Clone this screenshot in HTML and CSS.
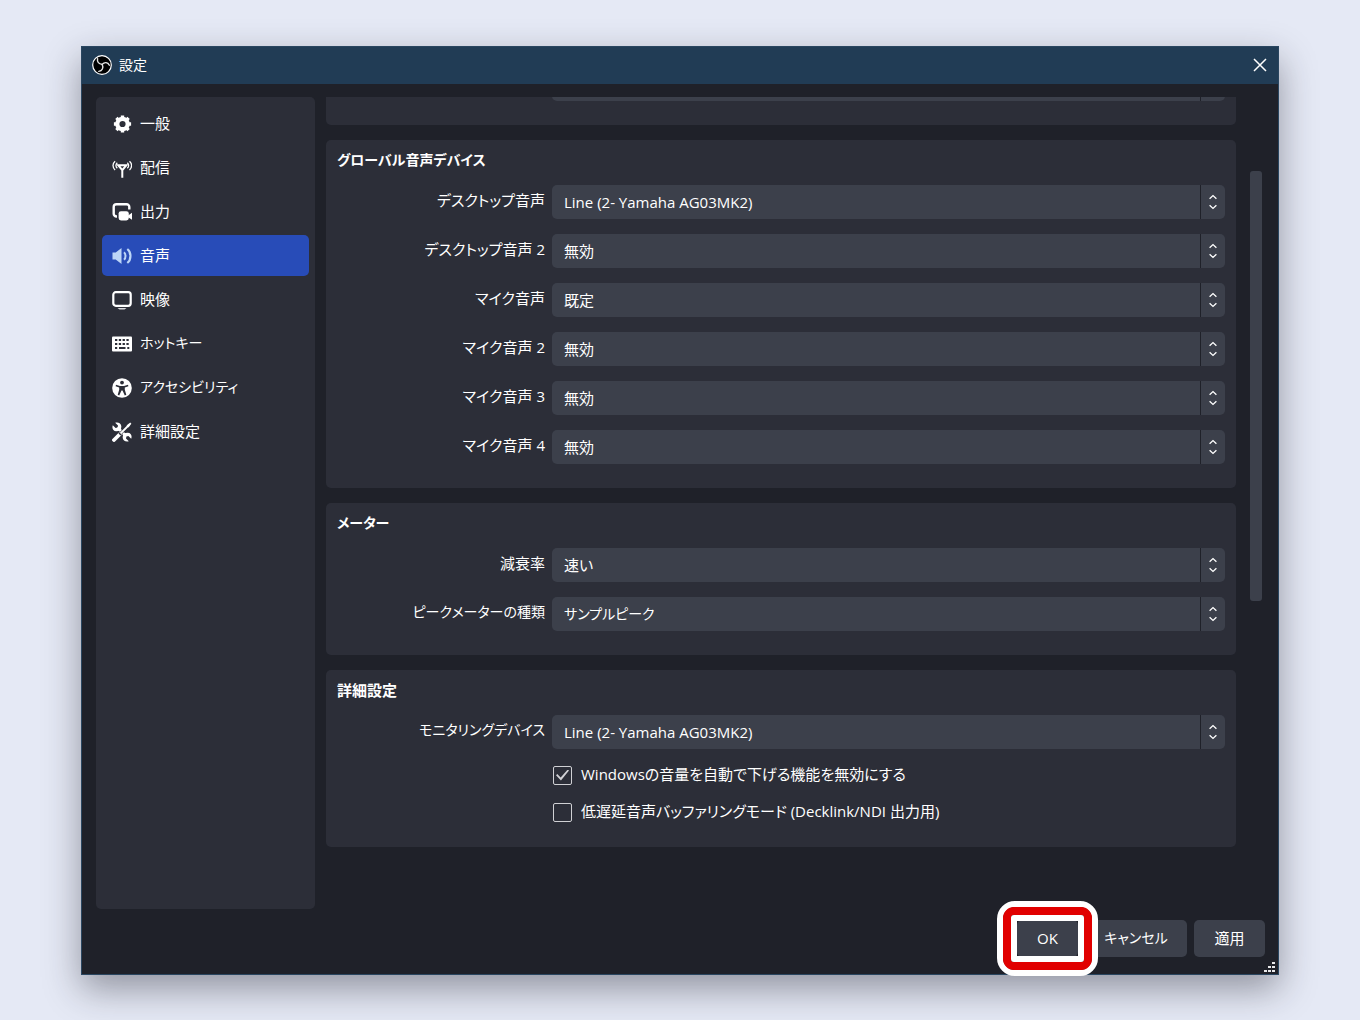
FILE: index.html
```html
<!DOCTYPE html>
<html lang="ja">
<head>
<meta charset="utf-8">
<meta name="viewport" content="width=device-width, initial-scale=1">
<title>設定</title>
<link rel="stylesheet" href="styles.css">
</head>
<body>
<svg class="defs" width="0" height="0" aria-hidden="true">
  <symbol id="arrows" viewBox="0 0 10 16"><path d="M1.6 4.8 5 1.6l3.4 3.2M1.6 11.2 5 14.4l3.4-3.2" fill="none" stroke="#fff" stroke-width="1.3"/></symbol>
</svg>
<main class="window">
  <header class="titlebar">
    <svg class="logo" viewBox="0 0 20 20" aria-hidden="true">
      <circle cx="10" cy="10" r="9.3" fill="#000" stroke="#fff" stroke-width="1.2"/>
      <g fill="none" stroke="#e4e4e4" stroke-width="1.4" stroke-linecap="round">
        <path d="M5.6 3.600C4.800 7 6.800 9 10.200 9.400"/>
        <path d="M17.400 10.200C15.800 7 12.400 6.800 10.200 9.400"/>
        <path d="M6.800 16.400C10.200 16 11.800 12.800 10.200 9.400"/>
      </g>
    </svg>
    <h1 class="titlebar-text">設定</h1>
    <button class="close" type="button" aria-label="閉じる">
      <svg viewBox="0 0 14 14" width="14" height="14"><path d="M1 1l12 12M13 1 1 13" stroke="#fff" stroke-width="1.5"/></svg>
    </button>
  </header>

  <div class="body">
    <nav class="sidebar">
      <a class="item" href="#general">
        <svg class="icon" viewBox="0 0 20 20"><circle cx="10.500" cy="10" r="5.200" fill="none" stroke="#fff" stroke-width="4.200"/><path d="M10.500 1.400v3M10.500 15.600v3M1.900 10h3M16.100 10h3M4.400 3.900l2.200 2.200M14.400 13.900l2.200 2.200M4.400 16.100l2.200-2.200M14.400 6.100l2.200-2.200" stroke="#fff" stroke-width="3.400"/></svg>
        <span>一般</span></a>
      <a class="item" href="#stream">
        <svg class="icon" viewBox="0 0 20 20" fill="none" stroke="#fff"><path d="M6.200 7.200h8.200L10.300 12.200zM10.300 11.500v8.200" stroke-width="2"/><path d="M3.100 3.300c-2.800 2.400-2.800 6.200 0 8.600M5.300 4.800c-1.800 1.500-1.800 4 0 5.500M17.500 3.300c2.800 2.400 2.800 6.200 0 8.600M15.300 4.800c1.800 1.500 1.800 4 0 5.500" stroke-width="1.300"/></svg>
        <span>配信</span></a>
      <a class="item" href="#output">
        <svg class="icon" viewBox="0 0 20 20"><path d="M5 14.500H4.500a2.800 2.800 0 0 1-2.800-2.800V5a2.800 2.800 0 0 1 2.800-2.800h10a2.800 2.800 0 0 1 2.800 2.800v2.600" fill="none" stroke="#fff" stroke-width="2.400"/><rect x="6.600" y="9.200" width="10.200" height="9.300" rx="2.400" fill="#fff"/><path d="M15.800 13.800 20 10.800v7l-4.200-2.800z" fill="#fff"/></svg>
        <span>出力</span></a>
      <a class="item item-active" href="#audio" aria-current="page">
        <svg class="icon" viewBox="0 0 20 20"><path d="M.5 6.500h3.200L9.500 2v16l-5.800-4.500H.5z" fill="#bdd6f7"/><path d="M12 6.300c2 1.700 2 5.700 0 7.400" fill="none" stroke="#bdd6f7" stroke-width="2"/><path d="M15.300 3c4.200 3.200 4.200 10.800 0 14" fill="none" stroke="#bdd6f7" stroke-width="2.200"/></svg>
        <span>音声</span></a>
      <a class="item" href="#video">
        <svg class="icon" viewBox="0 0 20 20"><rect x="1.300" y="2.200" width="17.400" height="13.600" rx="2.500" fill="none" stroke="#fff" stroke-width="2.200"/><path d="M5.500 18h9l-2 1.500h-5z" fill="#d8d8dc"/></svg>
        <span>映像</span></a>
      <a class="item" href="#hotkeys">
        <svg class="icon" viewBox="0 0 20 20"><rect x="0" y="2.500" width="20" height="15" rx="1" fill="#fff"/><path d="M3 6h14M3 10h14" stroke="#2c2e38" stroke-width="2.200" stroke-dasharray="2.300 1.500"/><path d="M3 14h2.200M7 14h6.500M15.300 14h2" stroke="#2c2e38" stroke-width="2"/></svg>
        <span class="kana">ホットキー</span></a>
      <a class="item" href="#accessibility">
        <svg class="icon" viewBox="0 0 20 20"><circle cx="10" cy="10" r="9.800" fill="#fff"/><circle cx="10" cy="4.600" r="1.900" fill="#2c2e38"/><path d="M4 6.800l4 1.100h4l4-1.100.4 1.400-3.600 1.400v2.200l1.500 5-1.500.6-2.300-4.800h-1L7.200 17.400l-1.500-.6 1.500-5V9.600L3.600 8.200z" fill="#2c2e38"/></svg>
        <span class="kana">アクセシビリティ</span></a>
      <a class="item" href="#advanced">
        <svg class="icon" viewBox="0 0 20 20"><path d="M5.500 5.500 14 14" stroke="#fff" stroke-width="2.600"/><path d="M3.200.8 6 3.600 5.600 5.600 3.600 6 .8 3.200C-.3 6 1 9.300 4.300 9.300 8 9.300 9.500 7.500 9.300 4.300 9.300 1.500 6-.3 3.200.8zM16.800 19.200 14 16.400l.4-2 2-.4 2.800 2.800c1.100-2.800-.2-6.100-3.500-6.100-3.700 0-5.200 1.800-5 5 0 2.800 3.300 4.600 6.100 3.500z" fill="#fff"/><path d="M2 18 8.500 11.500" stroke="#fff" stroke-width="3.800" stroke-linecap="round"/><path d="M7.500 12.500 17 3" stroke="#2c2e38" stroke-width="3"/><path d="M8.500 11.500 17 3" stroke="#fff" stroke-width="1.800"/><path d="M14.600 3.600 18.200.6l1.200 1.200-3 3.600z" fill="#fff"/></svg>
        <span>詳細設定</span></a>
    </nav>

    <div class="pane">
      <section class="group group-scrolled">
        <div class="combo"><select aria-label="チャンネル"></select><span class="spin"><svg width="10" height="16"><use href="#arrows"/></svg></span></div>
      </section>

      <section class="group">
        <h2 class="kana">グローバル音声デバイス</h2>
        <div class="rows">
          <div class="row"><label for="d1">デスクトップ音声</label><div class="combo"><select id="d1"><option>Line (2- Yamaha AG03MK2)</option></select><span class="spin"><svg width="10" height="16"><use href="#arrows"/></svg></span></div></div>
          <div class="row"><label for="d2">デスクトップ音声 2</label><div class="combo"><select id="d2"><option>無効</option></select><span class="spin"><svg width="10" height="16"><use href="#arrows"/></svg></span></div></div>
          <div class="row"><label for="m1">マイク音声</label><div class="combo"><select id="m1"><option>既定</option></select><span class="spin"><svg width="10" height="16"><use href="#arrows"/></svg></span></div></div>
          <div class="row"><label for="m2">マイク音声 2</label><div class="combo"><select id="m2"><option>無効</option></select><span class="spin"><svg width="10" height="16"><use href="#arrows"/></svg></span></div></div>
          <div class="row"><label for="m3">マイク音声 3</label><div class="combo"><select id="m3"><option>無効</option></select><span class="spin"><svg width="10" height="16"><use href="#arrows"/></svg></span></div></div>
          <div class="row"><label for="m4">マイク音声 4</label><div class="combo"><select id="m4"><option>無効</option></select><span class="spin"><svg width="10" height="16"><use href="#arrows"/></svg></span></div></div>
        </div>
      </section>

      <section class="group">
        <h2 class="kana">メーター</h2>
        <div class="rows">
          <div class="row"><label for="decay">減衰率</label><div class="combo"><select id="decay"><option>速い</option></select><span class="spin"><svg width="10" height="16"><use href="#arrows"/></svg></span></div></div>
          <div class="row"><label class="kana" for="peak">ピークメーターの種類</label><div class="combo"><select class="kana" id="peak"><option>サンプルピーク</option></select><span class="spin"><svg width="10" height="16"><use href="#arrows"/></svg></span></div></div>
        </div>
      </section>

      <section class="group">
        <h2>詳細設定</h2>
        <div class="rows">
          <div class="row"><label class="kana" for="monitor">モニタリングデバイス</label><div class="combo"><select id="monitor"><option>Line (2- Yamaha AG03MK2)</option></select><span class="spin"><svg width="10" height="16"><use href="#arrows"/></svg></span></div></div>
          <div class="row"><div class="check"><input type="checkbox" id="duck" checked><label for="duck">Windowsの音量を自動で下げる機能を無効にする</label></div></div>
          <div class="row"><div class="check"><input type="checkbox" id="lowlat"><label for="lowlat">低遅延音声バッファリングモード (Decklink/NDI 出力用)</label></div></div>
        </div>
      </section>
    </div>

    <div class="scrollbar"><div class="thumb"></div></div>
  </div>

  <footer class="footer">
    <div class="ok-wrap"><button class="btn btn-ok" type="button">OK</button><span class="ring"></span></div>
    <button class="btn btn-cancel kana" type="button">キャンセル</button>
    <button class="btn btn-apply" type="button">適用</button>
  </footer>
  <svg class="grip" viewBox="0 0 11 11" aria-hidden="true"><path fill="#e8e8ea" d="M8 0h3v2H8zM4 4h3v2H4zM8 4h3v2H8zM0 8h3v2H0zM4 8h3v2H4zM8 8h3v2H8z"/></svg>
</main>
</body>
</html>
```
FILE: styles.css
```css
* { box-sizing: border-box; }

body {
  margin: 0;
  min-height: 100vh;
  padding: 46px 81px 45px;
  display: flex;
  background: #e5e9f5;
  color: #fff;
  font: 15px/22px "Open Sans", "Noto Sans CJK JP", sans-serif;
  font-feature-settings: "palt";
}

h1, h2 { margin: 0; }

button, select, input {
  font: inherit;
  font-feature-settings: inherit;
  color: inherit;
}

.defs { position: absolute; }

.window {
  position: relative;
  flex: 1;
  min-width: 0;
  display: flex;
  flex-direction: column;
  background: #1f2129;
  border: 1px solid #2a4660;
  box-shadow: 0 14px 34px rgba(30, 30, 42, 0.42);
}

.titlebar {
  display: flex;
  align-items: center;
  gap: 7px;
  height: 37px;
  padding: 0 10px 2px;
  background: #213c55;
}

.logo { width: 20px; height: 20px; }

.titlebar-text {
  flex: 1;
  font-size: 14px;
  font-weight: 400;
}

.close {
  display: flex;
  padding: 1px;
  border: 0;
  background: none;
}

.body {
  flex: 1;
  display: flex;
  padding: 13px 16px 0 14px;
}

.sidebar {
  flex: none;
  width: 219px;
  margin-right: 11px;
  padding: 6px;
  display: flex;
  flex-direction: column;
  gap: 3px;
  background: #2c2e38;
  border-radius: 5px;
}

.item {
  display: flex;
  align-items: center;
  gap: 8px;
  height: 41px;
  padding: 0 10px;
  border-radius: 5px;
  color: #fff;
  text-decoration: none;
}

.item span { padding-bottom: 2px; }

.item-active { background: #284cb8; }

.icon { width: 20px; height: 20px; }

.pane {
  flex: 1;
  min-width: 0;
  display: flex;
  flex-direction: column;
  gap: 15px;
}

.group {
  padding: 0 11px 24px;
  background: #2c2e38;
  border-radius: 5px;
}

.group h2 {
  padding: 9px 0 14px;
  font-size: 15px;
  line-height: 22px;
  font-weight: 700;
}

/* Group that is scrolled almost out of view at the top of the pane */
.group-scrolled {
  flex: none;
  height: 28px;
  padding-left: 226px;
  display: flex;
  flex-direction: column;
  justify-content: flex-end;
  overflow: hidden;
  border-radius: 0 0 5px 5px;
}

.rows {
  display: flex;
  flex-direction: column;
  gap: 15px;
}

.row {
  display: grid;
  grid-template-columns: 208px 1fr;
  column-gap: 7px;
}

.row > label {
  padding-top: 4px;
  text-align: right;
}

.combo {
  position: relative;
  flex: none;
  height: 34px;
}

.combo select {
  display: block;
  width: 100%;
  height: 100%;
  padding: 0 36px 0 12px;
  appearance: none;
  background: #3c404b;
  border: 0;
  border-radius: 5px;
}

.spin {
  position: absolute;
  inset: 0 0 0 auto;
  width: 25px;
  display: flex;
  align-items: center;
  justify-content: center;
  border-left: 1px solid #1f2129;
  pointer-events: none;
}

.check {
  grid-column: 2;
  display: flex;
  align-items: center;
  gap: 9px;
  padding-left: 1px;
}

.check input {
  width: 19px;
  height: 19px;
  margin: 0;
  display: grid;
  place-items: center;
  appearance: none;
  border: 1px solid #d0d0d4;
  border-radius: 2px;
}

.check input:checked::before {
  content: "";
  width: 13px;
  height: 11px;
  background: #d0d0d4;
  clip-path: polygon(0 52%, 10% 42%, 36% 72%, 90% 0, 100% 9%, 38% 100%);
}

.check label { padding-bottom: 2px; line-height: 20px; }

.kana,
.group h2.kana,
.combo select.kana { font-size: 14px; }

.scrollbar {
  flex: none;
  width: 12px;
  margin-left: 14px;
  padding-top: 74px;
}

.thumb {
  height: 430px;
  background: #3c404b;
  border-radius: 3px;
}

.footer {
  display: flex;
  justify-content: flex-end;
  gap: 7px;
  padding: 11px 13px 17px;
}

.btn {
  height: 37px;
  padding: 0 0 2px;
  background: #3c404b;
  border: 0;
  border-radius: 5px;
}

.btn-ok { width: 61px; }
.btn-cancel { width: 102px; }
.btn-apply { width: 71px; }

.ok-wrap { position: relative; }

/* Red and white marker drawn around the OK button */
.ring {
  position: absolute;
  inset: -19px -20px;
  border: 6px solid #fff;
  border-radius: 18px;
  pointer-events: none;
}

.ring::before {
  content: "";
  position: absolute;
  inset: 0;
  border: 8px solid #e10000;
  border-radius: 11px;
}

.ring::after {
  content: "";
  position: absolute;
  inset: 8px;
  border: 6px solid #fff;
  border-radius: 3px;
}

.grip {
  position: absolute;
  right: 3px;
  bottom: 1px;
  width: 11px;
  height: 11px;
}
```
